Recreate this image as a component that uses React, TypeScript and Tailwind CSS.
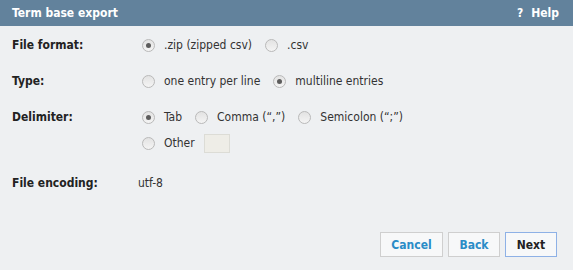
import React from "react";

function Radio({ checked, label }: { checked?: boolean; label: string }) {
  return (
    <label className="flex items-center gap-[9px] mr-[13px]">
      <span className="w-[13px] h-[13px] rounded-full border border-[#b9b9b9] bg-gradient-to-b from-[#e3e3e3] to-[#f4f4f4] flex items-center justify-center">
        {checked && <span className="w-[5px] h-[5px] rounded-full bg-[#5c5c5c]" />}
      </span>
      <span>{label}</span>
    </label>
  );
}

export default function App() {
  return (
    <div className="w-[573px] h-[270px] bg-[#eef0f2] text-[12px] text-[#333] flex flex-col" style={{ fontFamily: "'DejaVu Sans Condensed', 'DejaVu Sans', sans-serif" }}>
      <div className="h-[26px] bg-[#62829c] text-white font-bold flex items-center justify-between pl-[12px] pr-[14px]">
        <span>Term base export</span>
        <span className="flex items-center gap-[8px]"><span>?</span><span>Help</span></span>
      </div>
      <div className="flex-1 flex flex-col pl-[12px] pt-[12px]">
        <div className="flex items-center h-[14px] mb-[22px]">
          <div className="w-[130px] font-bold text-[#222]">File format:</div>
          <Radio checked label=".zip (zipped csv)" />
          <Radio label=".csv" />
        </div>
        <div className="flex items-center h-[14px] mb-[22px]">
          <div className="w-[130px] font-bold text-[#222]">Type:</div>
          <Radio label="one entry per line" />
          <Radio checked label="multiline entries" />
        </div>
        <div className="flex items-start mb-[20px]">
          <div className="w-[130px] font-bold text-[#222] h-[14px] flex items-center">Delimiter:</div>
          <div className="flex flex-col gap-[12px]">
            <div className="flex items-center h-[14px]">
              <Radio checked label="Tab" />
              <Radio label={"Comma (\u201C,\u201D)"} />
              <Radio label={"Semicolon (\u201C;\u201D)"} />
            </div>
            <div className="flex items-center h-[14px]">
              <Radio label="Other" />
              <span className="w-[26px] h-[19px] bg-[#eeede7] border border-[#dcdcd6] -ml-[4px]" />
            </div>
          </div>
        </div>
        <div className="flex items-center h-[14px] mt-[6px]">
          <div className="w-[126px] font-bold text-[#222]">File encoding:</div>
          <span>utf-8</span>
        </div>
        <div className="flex-1" />
        <div className="flex justify-end gap-[5px] pr-[16px] pb-[13px]">
          <button className="w-[63px] h-[25px] bg-[#f7f8f9] border border-[#cfcfcf] text-[#2a8cc7] font-bold">Cancel</button>
          <button className="w-[52px] h-[25px] bg-[#f7f8f9] border border-[#cfcfcf] text-[#2a8cc7] font-bold">Back</button>
          <button className="w-[52px] h-[25px] bg-[#f7f8f9] border border-[#8eb1e6] text-[#222] font-bold">Next</button>
        </div>
      </div>
    </div>
  );
}
